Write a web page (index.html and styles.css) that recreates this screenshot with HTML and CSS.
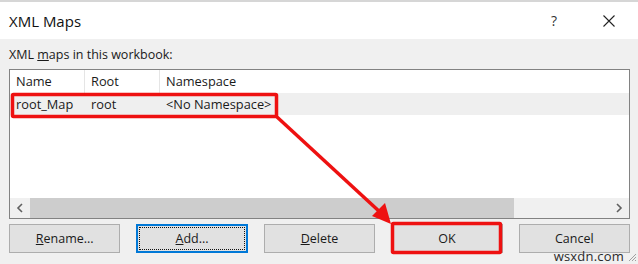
FILE: index.html
```html
<!DOCTYPE html>
<html lang="en">
<head>
  <meta charset="UTF-8">
  <title>XML Maps</title>
  <link rel="stylesheet" href="styles.css">
</head>
<body>
  <div class="dialog">
    <div class="titlebar">
      <span class="title">XML Maps</span>
      <span class="help">?</span>
      <svg class="close" width="12" height="12" viewBox="0 0 12 12">
        <path d="M0.5 0.5 L11.5 11.5 M11.5 0.5 L0.5 11.5" stroke="#222" stroke-width="1.1" fill="none"/>
      </svg>
    </div>

    <div class="content">
      <div class="label">XML <u>m</u>aps in this workbook:</div>

      <div class="listbox">
        <div class="header">
          <div class="col col-name">Name</div>
          <div class="col col-root">Root</div>
          <div class="col col-ns">Namespace</div>
        </div>
        <div class="row selected">
          <div class="col col-name">root_Map</div>
          <div class="col col-root">root</div>
          <div class="col col-ns">&lt;No Namespace&gt;</div>
        </div>
        <div class="spacer"></div>
        <div class="hscroll">
          <div class="arrow">
            <svg width="8" height="10" viewBox="0 0 8 10"><path d="M6 1 L2 5 L6 9" stroke="#606060" stroke-width="1.6" fill="none"/></svg>
          </div>
          <div class="thumb"></div>
          <div class="track"></div>
          <div class="arrow">
            <svg width="8" height="10" viewBox="0 0 8 10"><path d="M2 1 L6 5 L2 9" stroke="#606060" stroke-width="1.6" fill="none"/></svg>
          </div>
        </div>
      </div>

      <div class="buttons">
        <button class="btn"><u>R</u>ename...</button>
        <button class="btn focused"><span class="focus"><u>A</u>dd...</span></button>
        <button class="btn"><u>D</u>elete</button>
        <button class="btn">OK</button>
        <button class="btn">Cancel</button>
      </div>
    </div>

    <div class="watermark">wsxdn.com</div>
    <svg class="grip" width="10" height="10" viewBox="0 0 10 10">
      <path d="M9 2 L2 9 M9 5 L5 9 M9 8 L8 9" stroke="#a0a0a0" stroke-width="1"/>
    </svg>

    <!-- annotation -->
    <svg class="marks" width="638" height="264" viewBox="0 0 638 264">
      <rect x="12.5" y="94.5" width="264" height="22" fill="none" stroke="#ee1111" stroke-width="3.5" rx="1"/>
      <rect x="392.5" y="223.5" width="108" height="29" fill="none" stroke="#ee1111" stroke-width="3.5" rx="1"/>
      <path d="M277 117 L381 213" stroke="#ee1111" stroke-width="3.5" fill="none"/>
      <path d="M391 224 L372 216 L385 203 Z" fill="#ee1111"/>
    </svg>
  </div>
</body>
</html>
```

FILE: styles.css
```css
body {
  margin: 0;
  background: #ffffff;
  font-family: "Open Sans", "Noto Sans", sans-serif;
  font-size: 12px;
  color: #1a1a1a;
}
.dialog {
  position: relative;
  width: 638px;
  height: 264px;
  background: #f0f0f0;
  border-top: 2px solid #d6d6d6;
  box-sizing: border-box;
  overflow: hidden;
}
.titlebar {
  height: 37px;
  background: #ffffff;
  display: flex;
  align-items: center;
  padding-left: 9px;
}
.title {
  font-size: 15px;
  flex: 1;
  color: #111;
}
.help {
  font-size: 14px;
  width: 20px;
  margin-right: 32px;
  color: #333;
}
.close {
  margin-right: 23px;
}
.content {
  padding: 0 8px 0 9px;
}
.label {
  height: 30px;
  line-height: 14px;
  padding-top: 9px;
  box-sizing: border-box;
  font-size: 12.5px;
}
.listbox {
  height: 150px;
  border: 1px solid #828282;
  background: #ffffff;
  display: flex;
  flex-direction: column;
  box-sizing: border-box;
}
.header, .row {
  display: flex;
  height: 23px;
  align-items: center;
}
.row {
  height: 22px;
}
.row.selected {
  background: #efefef;
}
.col {
  padding-left: 6px;
  box-sizing: border-box;
  white-space: nowrap;
  font-size: 12.8px;
}
.header .col {
  border-right: 1px solid #e5e5e5;
  height: 23px;
  line-height: 23px;
}
.header .col-ns {
  border-right: none;
}
.col-name { width: 75px; }
.col-root { width: 75px; }
.col-ns { flex: 1; }
.spacer { flex: 1; }
.hscroll {
  height: 20px;
  display: flex;
  background: #f0f0f0;
}
.arrow {
  width: 20px;
  display: flex;
  align-items: center;
  justify-content: center;
}
.thumb {
  width: 484px;
  background: #cdcdcd;
}
.track { flex: 1; }
.buttons {
  display: flex;
  gap: 16px;
  margin-top: 5px;
}
.btn {
  width: 112px;
  height: 29px;
  background: #e1e1e1;
  border: 1px solid #adadad;
  font-family: "Open Sans", "Noto Sans", sans-serif;
  font-size: 12.5px;
  color: #1a1a1a;
  padding: 0;
}
.btn.focused {
  border: 2px solid #0078d7;
  padding: 1px;
}
.focus {
  display: flex;
  align-items: center;
  justify-content: center;
  height: 100%;
  border: 1px dotted #111;
  box-sizing: border-box;
}
.watermark {
  position: absolute;
  right: 14px;
  bottom: -1px;
  font-size: 13px;
  color: #2b2b2b;
  letter-spacing: 0.2px;
}
.grip {
  position: absolute;
  right: 1px;
  bottom: 2px;
}
.marks {
  position: absolute;
  left: 0;
  top: -2px;
}
```
